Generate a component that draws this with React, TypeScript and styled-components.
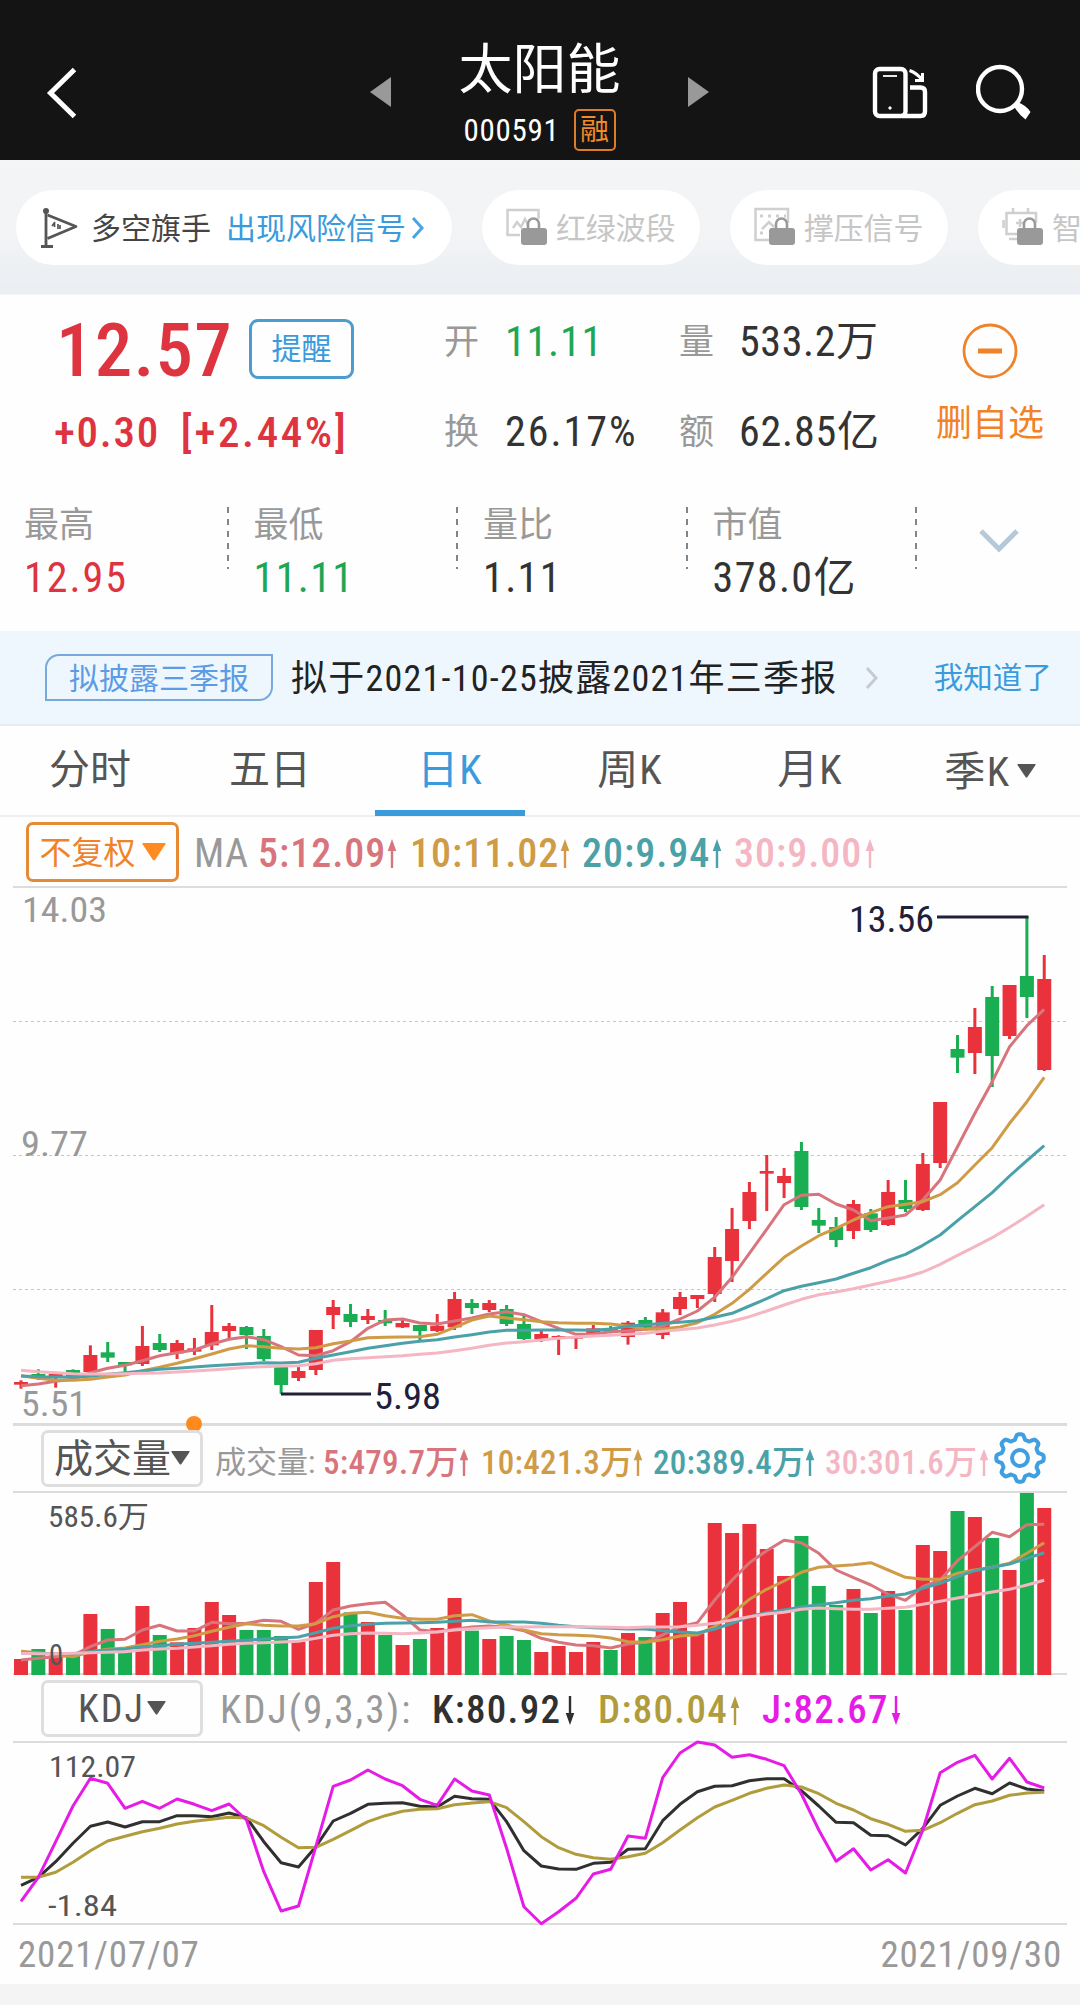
import React from "react";
import styled, { createGlobalStyle } from "styled-components";

const NUM = `"Roboto Condensed", Roboto, "Noto Sans CJK SC", sans-serif`;
const RED = "#dd3440";
const GREEN = "#1fa655";
const UP = "#ea323c";
const DOWN = "#19ae52";
const C5 = "#d8757c";
const C10 = "#cf9b47";
const C20 = "#4aa1a8";
const C30 = "#f4b6c3";
const BLUE = "#3a9bdc";
const ORANGE = "#f08328";

const Global = createGlobalStyle`
  * { box-sizing: border-box; }
  body { margin: 0; background: #fff; font-family: ${NUM}; font-stretch: 75%; }
`;

const Page = styled.div`
  width: 1080px;
  height: 2005px;
  overflow: hidden;
  background: #fefefe;
`;

const Txt = styled.span<{ $s: number; $c?: string; $w?: number; $ls?: number; $pt?: number }>`
  font-size: ${(p) => p.$s}px;
  line-height: 1;
  color: ${(p) => p.$c ?? "#333"};
  font-weight: ${(p) => p.$w ?? 400};
  letter-spacing: ${(p) => p.$ls ?? 0}px;
  padding-top: ${(p) => p.$pt ?? 0}px;
  white-space: nowrap;
`;

/* ---------- header ---------- */
const Header = styled.header`
  height: 160px;
  background: #141414;
  display: grid;
  grid-template-columns: 370px 21px 297px 21px 163px 56px 48px 56px;
  align-items: start;
`;
const Slot = styled.div<{ $t?: number; $l?: number }>`
  padding-top: ${(p) => p.$t ?? 0}px;
  padding-left: ${(p) => p.$l ?? 0}px;
  line-height: 0;
`;
const Title = styled.div`
  padding-top: 44px;
  display: flex;
  flex-direction: column;
  align-items: center;
`;
const CodeRow = styled.div`
  margin-top: 11px;
  display: flex;
  align-items: center;
  gap: 14px;
`;
const Badge = styled.span`
  width: 42px;
  height: 42px;
  border: 2px solid #e07c28;
  border-radius: 5px;
  display: grid;
  place-items: center;
`;

/* ---------- chips ---------- */
const Chips = styled.div`
  height: 134px;
  background: linear-gradient(#f4f5f5, #f1f3f5 60%, #eaeef2 97%, #eceff2);
  padding: 30px 0 0 16px;
  display: flex;
  gap: 30px;
`;
const Chip = styled.div<{ $w: number }>`
  flex: none;
  width: ${(p) => p.$w}px;
  height: 75px;
  border-radius: 38px;
  background: #fff;
  display: flex;
  align-items: center;
  padding-left: 24px;
`;

/* ---------- quote ---------- */
const Quote = styled.section`
  height: 337px;
  border-top: 1px solid #f3f4f6;
`;
const QuoteTop = styled.div`
  display: grid;
  grid-template-columns: 444px 61px 174px 60px 197px 108px;
  grid-template-rows: 90px 90px;
  padding-top: 2px;
  align-items: center;
`;
const PriceRow = styled.div`
  display: flex;
  align-items: center;
  padding: 14px 0 0 56px;
`;
const ChangeRow = styled.div`
  display: flex;
  padding-left: 54px;
  gap: 21px;
`;
const Remind = styled.button`
  margin-left: auto;
  margin-right: 90px;
  width: 105px;
  height: 60px;
  padding: 0;
  border: 3px solid #4d9ccf;
  border-radius: 9px;
  background: transparent;
  font-family: inherit;
  display: grid;
  place-items: center;
`;
const Remove = styled.div`
  grid-column: 6;
  grid-row: 1 / span 2;
  align-self: start;
  padding-top: 26px;
  display: flex;
  flex-direction: column;
  align-items: center;
  gap: 27px;
`;
const Stats = styled.div`
  display: flex;
  margin-top: 28px;
  padding-left: 24px;
`;
const Stat = styled.div`
  width: 229.5px;
  height: 96px;
  display: flex;
  flex-direction: column;
  gap: 14px;
  position: relative;
  padding-top: 3px;
  &::after {
    content: "";
    position: absolute;
    right: 25px;
    top: 2px;
    height: 62px;
    width: 2px;
    background: repeating-linear-gradient(#7d868c 0 6px, transparent 6px 12px);
  }
`;
const More = styled.div`
  padding: 24px 0 0 37px;
`;

/* ---------- notice ---------- */
const Notice = styled.div`
  height: 95px;
  background: #eff7fe;
  border-bottom: 2px solid #e9ecee;
  display: flex;
  align-items: center;
  padding-left: 45px;
`;
const Tag = styled.div`
  width: 228px;
  height: 47px;
  border: 2px solid #78a9dc;
  border-radius: 14px 0 14px 0;
  display: grid;
  place-items: center;
  margin-right: 18px;
`;

/* ---------- tabs ---------- */
const Tabs = styled.nav`
  height: 91px;
  display: grid;
  grid-template-columns: repeat(6, 180px);
  border-bottom: 2px solid #f0f0f0;
`;
const Tab = styled.div<{ $on?: boolean }>`
  position: relative;
  display: flex;
  align-items: center;
  justify-content: center;
  gap: 6px;
  &::after {
    content: "";
    display: ${(p) => (p.$on ? "block" : "none")};
    position: absolute;
    left: 15px;
    width: 150px;
    bottom: -1px;
    height: 6px;
    background: ${BLUE};
  }
`;

/* ---------- legends ---------- */
const Legend = styled.div<{ $h: number; $l: number }>`
  height: ${(p) => p.$h}px;
  padding-left: ${(p) => p.$l}px;
  display: flex;
  align-items: center;
`;
const Select = styled.div<{ $w: number; $h: number; $c: string; $gap: number }>`
  flex: none;
  width: ${(p) => p.$w}px;
  height: ${(p) => p.$h}px;
  border: 3px solid ${(p) => p.$c};
  border-radius: 7px;
  display: flex;
  align-items: center;
  justify-content: center;
  gap: ${(p) => p.$gap}px;
`;
const Cell = styled.div<{ $w: number; $gap: number; $pt: number }>`
  flex: none;
  width: ${(p) => p.$w}px;
  margin-right: ${(p) => p.$gap}px;
  padding-top: ${(p) => p.$pt}px;
  display: flex;
  align-items: center;
`;
const ArrowBox = styled.span`
  margin-left: auto;
  line-height: 0;
`;
const Dates = styled.div`
  height: 59px;
  display: flex;
  justify-content: space-between;
  padding: 11px 18px 0 18px;
`;
const Footer = styled.div`
  height: 21px;
  background: #f4f4f4;
`;
const Plot = styled.svg`
  display: block;
  overflow: visible;
`;

const Arrow = ({ c, down, h = 29 }: { c: string; down?: boolean; h?: number }) => (
  <svg width="10" height={h} viewBox="0 0 10 29" preserveAspectRatio="none">
    <g transform={down ? "rotate(180 5 14.5)" : undefined} fill={c}>
      <path d="M5 0 L9.3 12 H0.7 Z" />
      <rect x="3.8" y="8" width="2.4" height="21" />
    </g>
  </svg>
);
const Caret = ({ c, w, h }: { c: string; w: number; h: number }) => (
  <svg width={w} height={h} viewBox="0 0 20 14" preserveAspectRatio="none">
    <path d="M1 0H19Q20 0 19.5 1L11 13Q10 14 9 13L.5 1Q0 0 1 0Z" fill={c} />
  </svg>
);

type Entry = { t: string; c: string; w: number; gap: number; down?: boolean };
const Entries = ({ list, size, ls, h, pt = 0 }: { list: Entry[]; size: number; ls: number; h?: number; pt?: number }) => (
  <>
    {list.map((e) => (
      <Cell key={e.t} $w={e.w} $gap={e.gap} $pt={pt}>
        <Txt $s={size} $c={e.c} $ls={ls} $w={500}>{e.t}</Txt>
        <ArrowBox><Arrow c={e.c} down={e.down} h={h} /></ArrowBox>
      </Cell>
    ))}
  </>
);

/* ---------- data ---------- */
const X = (i: number) => 21 + i * 17.343;
// u/d, high, body top, body bottom, low — in thirds of a pixel below the plot's reference row
type Candle = [string, number, number, number, number];
const candles: Candle[] = [
  ["u", 1501, 1506, 1514, 1526], ["d", 1468, 1482, 1496, 1500], ["u", 1481, 1482, 1489, 1523], ["d", 1468, 1470, 1488, 1490],
  ["u", 1396, 1425, 1476, 1477], ["d", 1386, 1417, 1433, 1446], ["d", 1446, 1446, 1456, 1478], ["u", 1338, 1398, 1452, 1458],
  ["d", 1362, 1389, 1410, 1416], ["u", 1380, 1389, 1420, 1437], ["u", 1374, 1405, 1415, 1425], ["u", 1275, 1356, 1396, 1410],
  ["u", 1329, 1338, 1353, 1374], ["d", 1338, 1341, 1365, 1407], ["d", 1347, 1368, 1437, 1443], ["d", 1461, 1461, 1515, 1542],
  ["u", 1458, 1473, 1494, 1503], ["u", 1350, 1350, 1470, 1485], ["u", 1260, 1281, 1305, 1347], ["d", 1272, 1302, 1326, 1341],
  ["u", 1287, 1308, 1320, 1332], ["d", 1290, 1320, 1330, 1338], ["u", 1320, 1329, 1342, 1344], ["d", 1335, 1335, 1353, 1380],
  ["u", 1302, 1337, 1353, 1356], ["u", 1236, 1257, 1342, 1350], ["d", 1257, 1269, 1284, 1302], ["u", 1260, 1269, 1290, 1296],
  ["d", 1275, 1287, 1332, 1338], ["d", 1308, 1332, 1377, 1380], ["u", 1353, 1362, 1377, 1386], ["u", 1366, 1368, 1373, 1425],
  ["u", 1368, 1370, 1376, 1407], ["u", 1335, 1345, 1365, 1366], ["d", 1338, 1345, 1358, 1360], ["u", 1323, 1328, 1371, 1394],
  ["d", 1311, 1320, 1343, 1348], ["u", 1287, 1297, 1365, 1377], ["u", 1236, 1251, 1287, 1305], ["u", 1245, 1245, 1257, 1284],
  ["u", 1101, 1131, 1242, 1266], ["u", 984, 1047, 1143, 1206], ["u", 906, 936, 1023, 1047], ["u", 825, 873, 881, 993],
  ["u", 864, 888, 909, 954], ["d", 786, 813, 981, 990], ["d", 984, 1020, 1037, 1059], ["d", 1011, 1041, 1080, 1101],
  ["u", 960, 972, 1053, 1077], ["d", 987, 1000, 1050, 1056], ["u", 900, 936, 1035, 1038], ["d", 900, 960, 987, 996],
  ["u", 819, 852, 990, 993], ["u", 666, 666, 849, 864], ["d", 465, 507, 533, 579], ["u", 384, 441, 519, 582],
  ["d", 318, 351, 528, 621], ["u", 315, 315, 468, 477], ["d", 110, 288, 351, 414], ["u", 225, 297, 570, 573],
];
const ma5 = [1517,1512,1504,1498,1478,1465,1456,1442,1427,1418,1410,1392,1378,1370,1379,1400,1425,1427,1412,1385,1345,1320,1317,1329,1332,1323,1314,1302,1295,1304,1325,1345,1363,1362,1355,1352,1348,1338,1317,1293,1252,1192,1120,1048,974,946,943,972,990,1022,1014,1005,960,900,800,700,605,500,437,388];
const ma10 = [1487,1495,1501,1501,1498,1491,1485,1472,1462,1450,1436,1422,1407,1397,1400,1405,1407,1403,1391,1383,1373,1372,1371,1370,1363,1342,1320,1308,1314,1319,1325,1328,1330,1330,1332,1338,1348,1347,1341,1328,1303,1270,1228,1180,1132,1098,1067,1045,1020,998,980,973,965,944,908,855,803,730,665,592];
const ma20 = [1488,1490,1491,1491,1489,1483,1478,1473,1468,1465,1461,1457,1454,1451,1448,1449,1447,1435,1425,1415,1405,1397,1390,1384,1379,1371,1364,1356,1351,1351,1350,1350,1350,1351,1347,1338,1335,1330,1327,1322,1312,1300,1278,1256,1232,1219,1208,1197,1180,1163,1141,1123,1096,1065,1022,980,938,888,842,797];
const ma30 = [1471,1475,1478,1481,1482,1482,1481,1480,1479,1476,1473,1470,1466,1462,1460,1458,1457,1451,1441,1436,1433,1430,1427,1423,1419,1412,1405,1396,1389,1385,1380,1375,1371,1368,1366,1363,1360,1354,1349,1344,1335,1324,1310,1293,1275,1258,1244,1236,1226,1215,1204,1192,1176,1153,1126,1100,1073,1042,1009,974];
const vol = [537,507,527,527,402,447,512,378,465,487,444,366,405,450,450,468,485,306,246,397,426,465,495,477,444,354,452,477,468,480,516,498,516,486,510,459,471,399,366,460,129,159,132,207,288,168,318,375,327,399,333,390,195,213,93,111,174,270,39,84];
const mv5 = [540,535,530,526,500,480,478,450,436,453,453,427,431,430,421,424,448,430,390,378,371,367,405,450,455,448,441,438,442,452,475,487,495,497,504,492,487,465,440,428,360,300,248,212,181,188,220,270,293,315,343,361,320,300,242,200,157,170,134,133];
const mv10 = [514,518,524,530,515,508,504,494,484,477,467,454,442,431,436,438,438,431,410,400,397,407,415,418,418,407,404,423,435,450,461,464,466,468,474,485,487,479,468,464,440,400,358,328,303,277,262,258,254,248,270,292,298,298,280,270,262,250,220,188];
const mv20 = [519,520,521,521,515,511,507,500,497,493,490,487,484,481,477,474,471,458,445,437,433,430,429,428,427,424,421,426,426,426,430,436,440,443,445,447,447,452,456,459,447,430,410,398,390,381,374,368,361,356,348,342,325,310,290,272,262,252,235,218];
const mv30 = [520,521,521,520,518,517,515,510,507,505,501,497,493,490,488,486,484,475,466,461,459,460,461,459,456,450,446,443,441,441,440,440,440,441,442,443,441,441,440,436,430,420,410,402,397,388,384,386,388,388,385,382,373,364,354,345,336,328,315,301];
const kLine = [646,622,575,520,469,456,471,455,455,437,437,440,429,443,515,578,591,530,453,430,403,400,398,409,411,379,386,388,455,542,588,597,598,580,577,538,536,452,403,365,349,347,332,326,326,362,408,457,458,496,497,525,475,406,378,355,371,339,357,363];
const dLine = [622,622,607,577,542,513,499,485,475,462,454,448,442,444,467,502,533,532,508,482,455,437,424,418,416,404,399,395,413,455,500,533,553,563,568,560,550,518,480,443,411,391,370,355,345,351,371,400,420,446,463,484,481,458,430,404,393,376,369,367];
const jLine = [694,622,515,408,325,340,415,394,415,387,403,422,402,450,605,723,708,530,349,330,300,327,347,388,406,327,363,375,535,710,761,725,685,612,598,498,505,323,249,216,225,262,254,268,287,372,480,574,536,600,569,609,480,308,277,256,327,265,336,354];

const Line = ({ d, off, c, w = 3 }: { d: number[]; off: number; c: string; w?: number }) => (
  <polyline
    points={d.map((v, i) => `${X(i).toFixed(1)},${(v / 3 + off).toFixed(1)}`).join(" ")}
    fill="none" stroke={c} strokeWidth={w} strokeLinejoin="round"
  />
);
const Label = ({ x, y, s, c, w, children }: { x: number; y: number; s: number; c: string; w: number; children: string }) => (
  <text x={x} y={y} fontSize={s} fill={c} textLength={w} lengthAdjust="spacingAndGlyphs">{children}</text>
);

const PriceChart = () => (
  <Plot width="1080" height="538" viewBox="0 0 1080 538">
    <rect x="13" y="-1" width="1054" height="2" fill="#dcdcdc" />
    <rect x="13" y="536" width="1054" height="3" fill="#dcdcdc" />
    {[134.5, 268.5, 402.5].map((y) => (
      <line key={y} x1="13" x2="1067" y1={y} y2={y} stroke="#c6c6c6" strokeWidth="1.2" strokeDasharray="3 3" />
    ))}
    {candles.map(([k, h, t, b, l], i) => {
      const y = (v: number) => v / 3 - 7;
      const c = k === "u" ? UP : DOWN;
      return (
        <g key={i} fill={c}>
          <rect x={X(i) - 1.5} y={y(h)} width="3" height={(l - h) / 3} />
          <rect x={X(i) - 7} y={y(t)} width="14" height={(b - t) / 3} />
        </g>
      );
    })}
    <Line d={ma5} off={-7} c={C5} />
    <Line d={ma10} off={-7} c={C10} />
    <Line d={ma20} off={-7} c={C20} />
    <Line d={ma30} off={-7} c={C30} />
    <path d="M937 30H1028.500M281 507H371" stroke="#20203a" strokeWidth="3" />
    <Label x={22} y={35} s={35} c="#999" w={85}>14.03</Label>
    <Label x={21} y={268.5} s={35} c="#999" w={67}>9.77</Label>
    <Label x={21} y={529} s={35} c="#999" w={66}>5.51</Label>
    <Label x={849} y={45} s={36} c="#20203a" w={85}>13.56</Label>
    <Label x={374} y={522} s={36} c="#20203a" w={67}>5.98</Label>
    <circle cx="194" cy="537" r="8" fill="#ff8a1f" />
  </Plot>
);

const VolumeChart = () => (
  <Plot width="1080" height="184" viewBox="0 0 1080 184">
    <rect x="13" y="0" width="1054" height="2" fill="#dcdcdc" />
    <rect x="13" y="182" width="1054" height="2" fill="#dcdcdc" />
    {vol.map((v, i) => (
      <rect key={i} x={X(i) - 7} y={v / 3 - 11} width="14" height={(585 - v) / 3} fill={candles[i][0] === "u" ? UP : DOWN} />
    ))}
    <Line d={mv5} off={-11} c={C5} />
    <Line d={mv10} off={-11} c={C10} />
    <Line d={mv20} off={-11} c={C20} />
    <Line d={mv30} off={-11} c={C30} />
    <Label x={48} y={35.5} s={30} c="#555" w={101}>585.6万</Label>
    <Label x={49} y={174} s={29} c="#555" w={14}>0</Label>
  </Plot>
);

const KdjChart = () => (
  <Plot width="1080" height="184" viewBox="0 0 1080 184">
    <rect x="13" y="0" width="1054" height="2" fill="#dcdcdc" />
    <rect x="13" y="182" width="1054" height="2" fill="#dcdcdc" />
    <Line d={kLine} off={-71} c="#303030" />
    <Line d={dLine} off={-71} c="#b09c3c" />
    <Line d={jLine} off={-71} c="#e61ce6" />
    <Label x={49} y={36} s={30} c="#555" w={87}>112.07</Label>
    <Label x={48} y={175} s={30} c="#555" w={69}>-1.84</Label>
  </Plot>
);

/* ---------- icons ---------- */
const Flag = () => (
  <svg width="40" height="42" viewBox="0 0 40 42" fill="none" stroke="#555" strokeWidth="2.8">
    <path d="M6 3V38M1 39.5H13" /><circle cx="6" cy="4" r="1.6" />
    <path d="M7.5 8L36 19.5L7.5 31.5" strokeLinejoin="round" />
    <path d="M14.5 16V20M12 19L15 15M18 17V22M20 18V22" strokeWidth="1.7" />
  </svg>
);
const Lock = () => (
  <g>
    <path d="M22 22V17a5.5 5.5 0 0 1 11 0V22" fill="none" stroke="#999" strokeWidth="2.6" />
    <rect x="15" y="21" width="26" height="17" rx="3" fill="#999" />
  </g>
);
const LockedSvg = styled.svg`
  margin-right: 6px;
  fill: none;
  stroke: #cfcfcf;
  stroke-width: 2.5;
  rect { stroke: none; }
`;
const LockedIcon = ({ kind }: { kind: "wave" | "level" | "smart" }) => (
  <LockedSvg width="44" height="42" viewBox="0 0 44 42">
    {kind === "wave" && <path d="M14 28H1.500V3H32.500V12M7 21L11 15L15 20L19 12L22 18" />}
    {kind === "level" && (
      <>
        <path d="M16 33H1.500V2H34V16M8 22L15 15L20 20" />
        <path d="M6 9H32M6 26H14" strokeDasharray="3 5" strokeWidth="3" />
      </>
    )}
    {kind === "smart" && <path d="M16 27H4.500V6H34V16M11 6V1M26 6V1M1.500 13V21M7 32H16M14 16H22M18 12V20" />}
    <Lock />
  </LockedSvg>
);
const Gear = () => {
  const pts: string[] = [];
  for (let i = 0; i <= 96; i++) {
    const a = (i / 96) * Math.PI * 2;
    const r = 21.2 + 2.6 * Math.tanh(2.2 * Math.cos(8 * a));
    pts.push(`${(26 + r * Math.sin(a)).toFixed(2)},${(26 - r * Math.cos(a)).toFixed(2)}`);
  }
  return (
    <svg width="52" height="52" viewBox="0 0 52 52" fill="none" stroke="#3f9fe0" strokeWidth="4">
      <polygon points={pts.join(" ")} strokeLinejoin="round" />
      <circle cx="26" cy="26" r="8" />
    </svg>
  );
};

const Space = styled.span<{ $l?: number; $r?: number; $w?: number }>`
  margin-left: ${(p) => p.$l ?? 0}px;
  margin-right: ${(p) => p.$r ?? 0}px;
  ${(p) => (p.$w ? `width: ${p.$w}px; flex: none;` : "")}
  display: flex;
  align-items: center;
`;

export default function App() {
  return (
    <Page>
      <Global />
      <Header>
        <Slot $t={67} $l={46}>
          <svg width="32" height="52" viewBox="0 0 32 52"><path d="M28.500 2.500L4.500 26L28.500 49.500" fill="none" stroke="#fff" strokeWidth="5" /></svg>
        </Slot>
        <Slot $t={77}><svg width="21" height="30"><path d="M21 0V30L0 15Z" fill="#999" /></svg></Slot>
        <Title>
          <Txt $s={54} $c="#fff">太阳能</Txt>
          <CodeRow>
            <Txt $s={31} $c="#fff" $ls={0.7} $pt={1}>000591</Txt>
            <Badge><Txt $s={29} $c="#f08a2c">融</Txt></Badge>
          </CodeRow>
        </Title>
        <Slot $t={77}><svg width="21" height="30"><path d="M0 0V30L21 15Z" fill="#999" /></svg></Slot>
        <span />
        <Slot $t={66}>
          <svg width="56" height="54" viewBox="0 0 56 54" fill="none" stroke="#fff" strokeWidth="4.400">
            <rect x="3" y="3" width="30.500" height="47" rx="4.500" />
            <path d="M38 21.500H48.500Q53 21.500 53 26V45.500Q53 50 48.500 50H30" />
            <path d="M11 10H25" strokeWidth="1.8" />
            <circle cx="18" cy="42" r="1.2" strokeWidth="1" fill="#fff" />
            <path d="M37.500 4.500Q45 7 50 14M43 14.500H50.500V7" strokeWidth="3" />
          </svg>
        </Slot>
        <span />
        <Slot $t={64}>
          <svg width="56" height="58" viewBox="0 0 56 58" fill="none" stroke="#fff">
            <circle cx="24" cy="25" r="22" strokeWidth="4.400" />
            <path d="M37.500 41.500L41 38Q50 41 54.500 48L49.500 55.500Q43 51 37.500 41.500Z" fill="#fff" stroke="none" />
          </svg>
        </Slot>
      </Header>

      <Chips>
        <Chip $w={436}>
          <Flag />
          <Space $l={11}><Txt $s={30} $c="#444" $pt={3}>多空旗手</Txt></Space>
          <Space $l={15} $r={4}><Txt $s={30} $c={BLUE} $pt={3}>出现风险信号</Txt></Space>
          <svg width="16" height="24" viewBox="0 0 16 24"><path d="M3 2L12 12L3 22" fill="none" stroke="#4aa5e2" strokeWidth="3" /></svg>
        </Chip>
        <Chip $w={218}><LockedIcon kind="wave" /><Txt $s={30} $c="#c6c6c6" $ls={-0.2} $pt={3}>红绿波段</Txt></Chip>
        <Chip $w={218}><LockedIcon kind="level" /><Txt $s={30} $c="#c6c6c6" $ls={-0.2} $pt={3}>撑压信号</Txt></Chip>
        <Chip $w={218}><LockedIcon kind="smart" /><Txt $s={30} $c="#c6c6c6" $ls={-0.2} $pt={3}>智</Txt></Chip>
      </Chips>

      <Quote>
        <QuoteTop>
          <PriceRow>
            <Txt $s={75} $c={RED} $w={500} $ls={1.2} $pt={3}>12.57</Txt>
            <Remind><Txt $s={30} $c={BLUE}>提醒</Txt></Remind>
          </PriceRow>
          <Txt $s={35} $c="#999">开</Txt><Txt $s={42} $c={GREEN} $ls={0.8}>11.11</Txt>
          <Txt $s={35} $c="#999">量</Txt><Txt $s={42} $ls={0.6}>533.2万</Txt>
          <ChangeRow>
            <Txt $s={43} $c={RED} $w={500} $ls={1.7}>+0.30</Txt>
            <Txt $s={43} $c={RED} $w={500} $ls={2.6}>[+2.44%]</Txt>
          </ChangeRow>
          <Txt $s={35} $c="#999">换</Txt><Txt $s={42} $ls={2}>26.17%</Txt>
          <Txt $s={35} $c="#999">额</Txt><Txt $s={42} $ls={0.8}>62.85亿</Txt>
          <Remove>
            <svg width="56" height="56" viewBox="0 0 56 56" fill="none" stroke={ORANGE}>
              <circle cx="28" cy="28" r="26" strokeWidth="2.800" /><path d="M16 28H40" strokeWidth="5" />
            </svg>
            <Txt $s={36} $c={ORANGE}>删自选</Txt>
          </Remove>
        </QuoteTop>
        <Stats>
          <Stat><Txt $s={35} $c="#999">最高</Txt><Txt $s={42} $c={RED} $ls={2}>12.95</Txt></Stat>
          <Stat><Txt $s={35} $c="#999">最低</Txt><Txt $s={42} $c={GREEN} $ls={1.4}>11.11</Txt></Stat>
          <Stat><Txt $s={35} $c="#999">量比</Txt><Txt $s={42} $ls={1.4}>1.11</Txt></Stat>
          <Stat><Txt $s={35} $c="#999">市值</Txt><Txt $s={42} $ls={1.4}>378.0亿</Txt></Stat>
          <More><svg width="40" height="24" viewBox="0 0 40 24"><path d="M2 2L20 20L38 2" fill="none" stroke="#b5c9d9" strokeWidth="5" /></svg></More>
        </Stats>
      </Quote>

      <Notice>
        <Tag><Txt $s={30} $c="#5c9ce4" $pt={2}>拟披露三季报</Txt></Tag>
        <Txt $s={36} $c="#222" $ls={1.25} $pt={2}>拟于2021-10-25披露2021年三季报</Txt>
        <Space $l={27} $r={55}>
          <svg width="14" height="24" viewBox="0 0 14 24"><path d="M2 2L11 12L2 22" fill="none" stroke="#c4cbd2" strokeWidth="3" /></svg>
        </Space>
        <Txt $s={29.5} $c={BLUE} $pt={3}>我知道了</Txt>
      </Notice>

      <Tabs>
        <Tab><Txt $s={41} $c="#555">分时</Txt></Tab>
        <Tab><Txt $s={41} $c="#555">五日</Txt></Tab>
        <Tab $on><Txt $s={41} $c={BLUE} $ls={1}>日K</Txt></Tab>
        <Tab><Txt $s={41} $c="#555" $ls={1}>周K</Txt></Tab>
        <Tab><Txt $s={41} $c="#555" $ls={1}>月K</Txt></Tab>
        <Tab><Txt $s={41} $c="#555" $ls={1.5} $pt={3}>季K</Txt><Caret c="#555" w={19} h={14} /></Tab>
      </Tabs>

      <Legend $h={70} $l={26}>
        <Select $w={153} $h={60} $c="#e58a35" $gap={6}><Txt $s={32} $c={ORANGE} $pt={2}>不复权</Txt><Caret c="#ff8a1f" w={24} h={18} /></Select>
        <Space $l={15} $w={64}><Txt $s={40} $c="#999" $ls={0.5} $pt={3}>MA</Txt></Space>
        <Entries size={40} ls={1} pt={3} list={[
          { t: "5:12.09", c: C5, w: 139, gap: 13 },
          { t: "10:11.02", c: C10, w: 160, gap: 12 },
          { t: "20:9.94", c: C20, w: 140, gap: 12 },
          { t: "30:9.00", c: C30, w: 141, gap: 0 },
        ]} />
      </Legend>
      <PriceChart />

      <Legend $h={66} $l={41}>
        <Select $w={162} $h={57} $c="#dedede" $gap={0}><Txt $s={39} $c="#555" $pt={3}>成交量</Txt><Caret c="#555" w={19} h={14} /></Select>
        <Space $l={12} $w={108}><Txt $s={31} $c="#999" $pt={9}>成交量:</Txt></Space>
        <Entries size={33} ls={0.3} h={27} pt={9} list={[
          { t: "5:479.7万", c: C5, w: 146, gap: 12 },
          { t: "10:421.3万", c: C10, w: 161, gap: 11 },
          { t: "20:389.4万", c: C20, w: 162, gap: 10 },
          { t: "30:301.6万", c: C30, w: 164, gap: 5 },
        ]} />
        <Gear />
      </Legend>
      <VolumeChart />

      <Legend $h={66} $l={41}>
        <Select $w={162} $h={57} $c="#dedede" $gap={2}><Txt $s={38} $c="#555" $ls={2} $pt={2}>KDJ</Txt><Caret c="#555" w={19} h={14} /></Select>
        <Space $l={17} $w={212}><Txt $s={39} $c="#999" $ls={2.1} $pt={4}>KDJ(9,3,3):</Txt></Space>
        <Entries size={39} ls={1.3} pt={4} list={[
          { t: "K:80.92", c: "#303030", w: 143, gap: 23, down: true },
          { t: "D:80.04", c: "#b09c3c", w: 142, gap: 22 },
          { t: "J:82.67", c: "#e61ce6", w: 139, gap: 0, down: true },
        ]} />
      </Legend>
      <KdjChart />

      <Dates>
        <Txt $s={37} $c="#999" $ls={0.8}>2021/07/07</Txt>
        <Txt $s={37} $c="#999" $ls={0.8}>2021/09/30</Txt>
      </Dates>
      <Footer />
    </Page>
  );
}
